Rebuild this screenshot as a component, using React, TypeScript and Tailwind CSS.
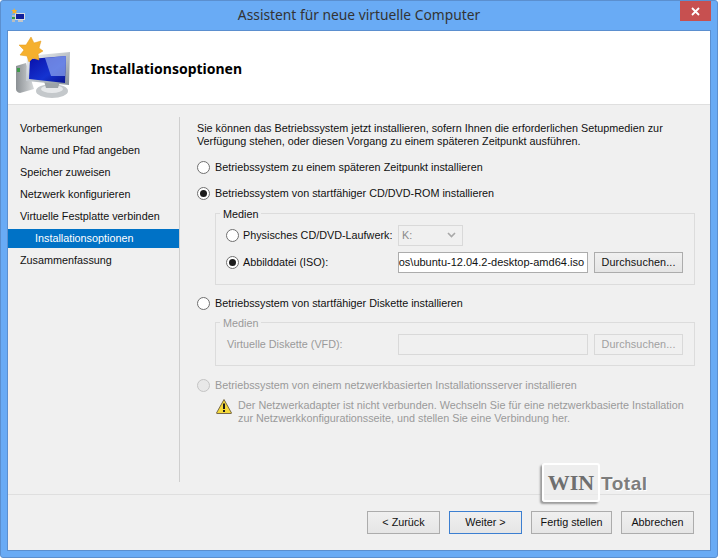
const font = "font-['Liberation_Sans','Open_Sans',sans-serif]";
const titleFont = "font-['Noto_Sans','Open_Sans',sans-serif]";

const steps = [
  "Vorbemerkungen",
  "Name und Pfad angeben",
  "Speicher zuweisen",
  "Netzwerk konfigurieren",
  "Virtuelle Festplatte verbinden",
  "Installationsoptionen",
  "Zusammenfassung",
];

function WizardIcon() {
  return (
    <svg width="56" height="62" viewBox="0 0 56 62" className="shrink-0">
      <defs>
        <linearGradient id="scr" x1="0" y1="0" x2="1" y2="1">
          <stop offset="0" stopColor="#0a0fa8" />
          <stop offset="0.6" stopColor="#1433d0" />
          <stop offset="1" stopColor="#0a1490" />
        </linearGradient>
        <linearGradient id="frame" x1="0" y1="0" x2="1" y2="1">
          <stop offset="0" stopColor="#f6f8fa" />
          <stop offset="1" stopColor="#87919a" />
        </linearGradient>
        <linearGradient id="tower" x1="0" y1="0" x2="1" y2="0">
          <stop offset="0" stopColor="#8b9094" />
          <stop offset="1" stopColor="#d6d9db" />
        </linearGradient>
      </defs>
      <path d="M0 29 L10 26 L18 52 L4 56 Q0 55 0 52 Z" fill="url(#tower)" />
      <rect x="1" y="31" width="3" height="4" fill="#3f9a4a" />
      <ellipse cx="36" cy="54" rx="16" ry="7" fill="#c4c8cb" />
      <ellipse cx="36" cy="52" rx="11" ry="4" fill="#e6e8ea" />
      <path d="M28 44 L44 45 L42 51 L30 51 Z" fill="#9ca3a8" />
      <path d="M11 19 L54 15 L53 48 L10 44 Z" fill="url(#frame)" />
      <path d="M14 22 L50 19 L49 46 L13 42 Z" fill="url(#scr)" />
      <path d="M29 21 L50 19 L49 39 L35 39 Z" fill="#8ea6ee" opacity="0.7" />
      <path
        d="M15 0 L18 6 L25 4 L23 11 L27 14 L22 17 L23 23 L17 21 L13 25 L11 19 L4 18 L8 13 L3 8 L10 8 Z"
        fill="#f5b02e"
        stroke="#e59a17"
        strokeWidth="0.5"
      />
    </svg>
  );
}

function TitleIcon() {
  return (
    <svg width="15" height="15" viewBox="0 0 15 15" className="shrink-0">
      <rect x="1" y="7" width="3" height="7" fill="#b8bdc0" />
      <rect x="1" y="9" width="3" height="2" fill="#3c9a46" />
      <rect x="4" y="5" width="10" height="7" fill="#d9dde0" />
      <rect x="5" y="6" width="8" height="5" fill="#12209c" />
      <rect x="7" y="12" width="5" height="2" fill="#c2c6c9" />
      <path d="M3 0 L4 2 L6 2 L5 4 L6 6 L3.500 5 L1 6 L2 4 L0.500 2 L2.500 2 Z" fill="#f5b02e" />
    </svg>
  );
}

function WarningIcon() {
  return (
    <svg width="16" height="15" viewBox="0 0 16 15" className="shrink-0">
      <path d="M8 0.500 L15.500 14 Q15.500 14.500 15 14.500 L1 14.500 Q0.500 14.500 0.500 14 Z" fill="#f5d93a" stroke="#77694a" strokeWidth="1" />
      <rect x="7" y="4.500" width="2" height="5.500" fill="#1c1c1c" />
      <rect x="7" y="11" width="2" height="2" fill="#1c1c1c" />
    </svg>
  );
}

function Radio({ checked, disabled }: { checked?: boolean; disabled?: boolean }) {
  return (
    <span
      className={
        "flex h-[13px] w-[13px] shrink-0 items-center justify-center rounded-full border " +
        (disabled ? "border-[#c4c4c4] bg-[#e8e8e8]" : "border-[#707070] bg-white")
      }
    >
      {checked && <span className="h-[7px] w-[7px] rounded-full bg-[#1c1c1c]" />}
    </span>
  );
}

function RadioRow({ label, checked, disabled }: { label: string; checked?: boolean; disabled?: boolean }) {
  return (
    <div className={"flex h-[16px] items-center gap-[5px] whitespace-nowrap " + (disabled ? "text-[#9a9a9a]" : "text-[#111]")}>
      <Radio checked={checked} disabled={disabled} />
      <span>{label}</span>
    </div>
  );
}

function Group({ disabled, className, children }: { disabled?: boolean; className: string; children: React.ReactNode }) {
  return (
    <div className={"relative ml-[18px] w-[480px] border border-[#dcdcdc] " + className}>
      <span className={"absolute left-[4px] top-[-8px] bg-[#f0f0f0] px-[3px] leading-[16px] " + (disabled ? "text-[#9a9a9a]" : "text-[#111]")}>
        Medien
      </span>
      {children}
    </div>
  );
}

function SmallButton({ disabled }: { disabled?: boolean }) {
  return (
    <div
      className={
        "flex h-[21px] w-[89px] shrink-0 items-center justify-center border tracking-[0.1px] " +
        (disabled
          ? "border-[#d9d9d9] text-[#a0a0a0]"
          : "border-[#acacac] bg-gradient-to-b from-[#f0f0f0] to-[#e5e5e5] text-[#111]")
      }
    >
      Durchsuchen...
    </div>
  );
}

function FooterButton({ label, focused, width }: { label: string; focused?: boolean; width: string }) {
  return (
    <div
      className={
        "flex h-[23px] items-center justify-center border bg-gradient-to-b from-[#f0f0f0] to-[#e5e5e5] text-[#111] " +
        width +
        (focused ? " border-[#3c7fd1]" : " border-[#acacac]")
      }
    >
      {label}
    </div>
  );
}

export default function App() {
  return (
    <div className={"relative flex h-[558px] w-[718px] flex-col overflow-hidden rounded-[3px] border border-[#5b8fcf] bg-[#69abf5] text-[10.8px] " + font}>
      <div className="relative flex h-[29px] shrink-0 items-center pl-[10px]">
        <TitleIcon />
        <div className={"flex-1 pr-[25px] text-center text-[13.8px] text-[#333] " + titleFont}>
          Assistent für neue virtuelle Computer
        </div>
        <div className="absolute right-[6px] top-0 flex h-[20px] w-[31px] items-center justify-center bg-[#c75050]">
          <svg width="9" height="9" viewBox="0 0 9 9">
            <path d="M1 1 L8 8 M8 1 L1 8" stroke="#fff" strokeWidth="1.800" />
          </svg>
        </div>
      </div>

      <div className="mx-[6px] flex h-[521px] flex-col border border-[#5b8fcf] bg-[#f0f0f0]">
        <div className="flex h-[74px] shrink-0 items-center gap-[19px] border-b border-[#dfdfdf] bg-white pl-[8px]">
          <WizardIcon />
          <h1 className={"pt-[2px] text-[14px] font-bold text-black " + titleFont}>Installationsoptionen</h1>
        </div>

        <div className="flex h-[389px] shrink-0 pt-[12px]">
          <ul className="w-[171px] shrink-0 text-[#111]">
            {steps.map((step) =>
              step === "Installationsoptionen" ? (
                <li key={step} className="my-[1.500px] flex h-[19px] items-center bg-[#0072c6] pl-[27px] text-white">
                  {step}
                </li>
              ) : (
                <li key={step} className="flex h-[22px] items-center pl-[12px]">
                  {step}
                </li>
              ),
            )}
          </ul>
          <div className="h-[365px] w-px shrink-0 bg-[#cfcfcf]" />
          <div className="min-w-0 flex-1 pl-[17px] pt-[5px]">
            <p className="w-[500px] whitespace-nowrap leading-[13px] text-[#111]">
              Sie können das Betriebssystem jetzt installieren, sofern Ihnen die erforderlichen Setupmedien zur
              <br />
              Verfügung stehen, oder diesen Vorgang zu einem späteren Zeitpunkt ausführen.
            </p>
            <div className="mt-[11px]">
              <RadioRow label="Betriebssystem zu einem späteren Zeitpunkt installieren" />
            </div>
            <div className="mt-[10px]">
              <RadioRow label="Betriebssystem von startfähiger CD/DVD-ROM installieren" checked />
            </div>
            <Group className="mt-[12px] h-[72px]">
              <div className="mt-[10px] flex h-[22px] items-center pl-[10px] text-[#111]">
                <Radio />
                <span className="ml-[4px] w-[155px] whitespace-nowrap">Physisches CD/DVD-Laufwerk:</span>
                <div className="flex h-[21px] w-[65px] items-center justify-between border border-[#d9d9d9] pl-[3px] pr-[6px] text-[#8a8a8a]">
                  K:
                  <svg width="9" height="6" viewBox="0 0 9 6">
                    <path d="M1 1 L4.500 4.500 L8 1" fill="none" stroke="#a8a8a8" strokeWidth="1.600" />
                  </svg>
                </div>
              </div>
              <div className="mt-[6px] flex h-[21px] items-center pl-[10px] text-[#111]">
                <Radio checked />
                <span className="ml-[4px] w-[155px]">Abbilddatei (ISO):</span>
                <div className="mr-[6px] flex h-[21px] w-[190px] items-center justify-end overflow-hidden border border-[#acacac] bg-white pr-[3px] text-[11px] whitespace-nowrap">
                  <span className="shrink-0">isos\ubuntu-12.04.2-desktop-amd64.iso</span>
                </div>
                <SmallButton />
              </div>
            </Group>
            <div className="mt-[10px]">
              <RadioRow label="Betriebssystem von startfähiger Diskette installieren" />
            </div>
            <Group disabled className="mt-[11px] h-[44px]">
              <div className="mt-[11px] flex h-[21px] items-center pl-[11px] text-[#9a9a9a]">
                <span className="w-[171px]">Virtuelle Diskette (VFD):</span>
                <div className="mr-[6px] h-[21px] w-[190px] border border-[#d9d9d9] bg-[#f0f0f0]" />
                <SmallButton disabled />
              </div>
            </Group>
            <div className="mt-[11px]">
              <RadioRow label="Betriebssystem von einem netzwerkbasierten Installationsserver installieren" disabled />
            </div>
            <div className="ml-[19px] mt-[4px] flex gap-[6px] text-[#9a9a9a]">
              <div className="pt-[2px]">
                <WarningIcon />
              </div>
              <p className="w-[470px] whitespace-nowrap pt-[2px] leading-[13px]">
                Der Netzwerkadapter ist nicht verbunden. Wechseln Sie für eine netzwerkbasierte Installation
                <br />
                zur Netzwerkkonfigurationsseite, und stellen Sie eine Verbindung her.
              </p>
            </div>
          </div>
        </div>

        <div className="flex flex-1 items-start justify-end gap-[9px] border-t border-[#dfdfdf] pr-[16px] pt-[16px]">
          <FooterButton label="< Zurück" width="w-[73px]" />
          <FooterButton label="Weiter >" width="w-[73px]" focused />
          <FooterButton label="Fertig stellen" width="w-[81px]" />
          <FooterButton label="Abbrechen" width="w-[73px]" />
        </div>
      </div>

      {/* watermark over the dialog */}
      <div className="absolute left-[541px] top-[462px] flex items-center">
        <div className="flex h-[39px] w-[58px] items-center justify-center rounded-[3px] border-2 border-white bg-[#ececec]/70 font-['Liberation_Serif',serif] text-[22px] font-bold text-[#6f6f6f] shadow-[-2px_2px_2px_#9a9a9a]">
          WIN
        </div>
        <span className="ml-[1px] pt-[4px] font-['Liberation_Sans',sans-serif] text-[19px] font-bold tracking-[0.5px] text-[#7d7d7d] [text-shadow:1px_1px_0_#fff]">
          Total
        </span>
      </div>
    </div>
  );
}
